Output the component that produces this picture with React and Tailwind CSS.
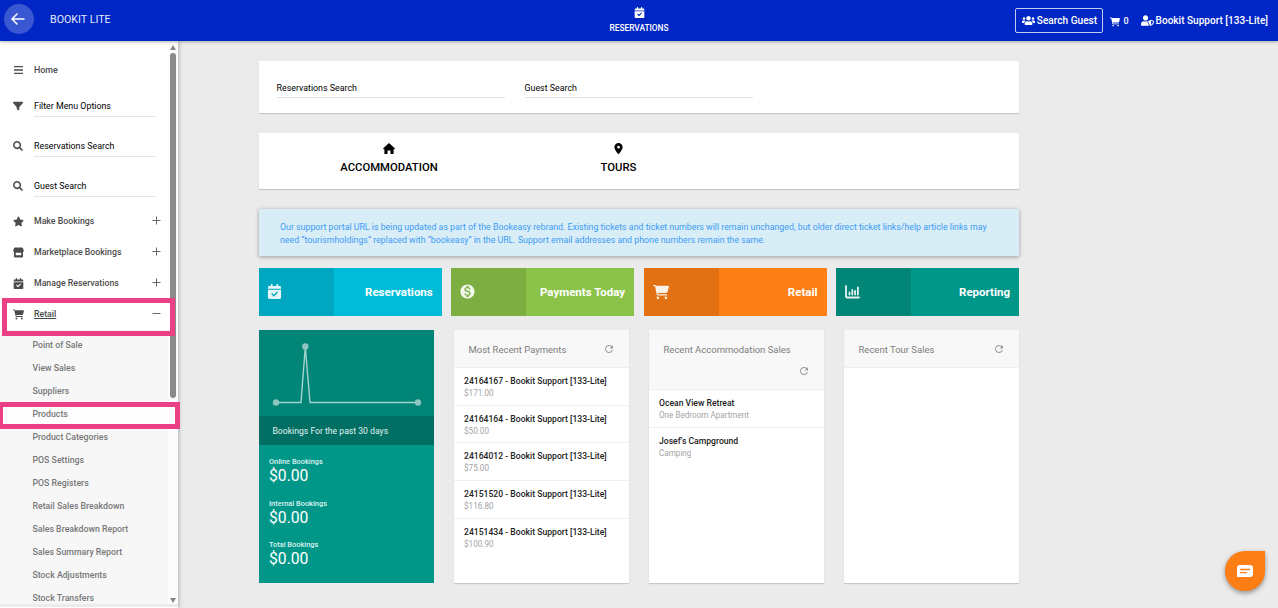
import React from "react";
import {
  FaFilter, FaStar, FaCalendarCheck, FaCartShopping,
  FaLocationDot,
} from "react-icons/fa6";
import { FaSearch, FaUsers, FaUserShield } from "react-icons/fa";
import { MdMonetizationOn, MdRefresh } from "react-icons/md";

function StoreIcon({ className }) {
  return (
    <svg viewBox="0 0 22 22" className={className} fill="currentColor">
      <path d="M4 1h14q1.200 0 1.700 1.200L21.500 7q.3 3-2.500 3H3Q.2 10 .5 7L2.300 2.200Q2.800 1 4 1z" />
      <path fillRule="evenodd" d="M2 9h18v10q0 2-2 2H4q-2 0-2-2zM5.500 11.500v5h11v-5z" />
    </svg>
  );
}

const searches = [
  [FaFilter, "Filter Menu Options"],
  [FaSearch, "Reservations Search"],
  [FaSearch, "Guest Search"],
];

const groups = [
  [FaStar, "Make Bookings"],
  [StoreIcon, "Marketplace Bookings"],
  [FaCalendarCheck, "Manage Reservations"],
  [FaCartShopping, "Retail"],
];

const retailLinks = [
  "Point of Sale", "View Sales", "Suppliers", "Products", "Product Categories",
  "POS Settings", "POS Registers", "Retail Sales Breakdown", "Sales Breakdown Report",
  "Sales Summary Report", "Stock Adjustments", "Stock Transfers",
];

const payments = [
  ["24164167 - Bookit Support [133-Lite]", "$171.00"],
  ["24164164 - Bookit Support [133-Lite]", "$50.00"],
  ["24164012 - Bookit Support [133-Lite]", "$75.00"],
  ["24151520 - Bookit Support [133-Lite]", "$116.80"],
  ["24151434 - Bookit Support [133-Lite]", "$100.90"],
];

const sales = [
  ["Ocean View Retreat", "One Bedroom Apartment"],
  ["Josef's Campground", "Camping"],
];

function ChartIcon({ className }) {
  return (
    <svg viewBox="0 0 15 14" className={className} fill="none" stroke="currentColor" strokeLinecap="round">
      <path d="M1 1v10.500q0 1 1 1h12" strokeWidth="1.8" />
      <path d="M4.500 7.500v2M7.300 5v4.500M10.100 6v3.500M12.900 2.500v7" strokeWidth="1.800" />
    </svg>
  );
}

function Header() {
  return (
    <header className="relative z-10 flex h-[41px] shrink-0 items-start justify-between bg-[#0027c5] text-white shadow-[0_1px_3px_rgba(0,0,0,0.3)]">
      <div className="flex w-[420px] items-center pt-1 pl-1">
        <div className="flex size-[30px] items-center justify-center rounded-full bg-[#3a57d2]">
          <svg viewBox="0 0 14 12" className="mr-0.5 h-3 w-3.5" fill="none" stroke="currentColor" strokeWidth="1.5" strokeLinecap="round" strokeLinejoin="round">
            <path d="M13 6H1M6 1 1 6l5 5" />
          </svg>
        </div>
        <span className="mt-0.5 ml-4 text-[10.7px] text-[#e4e9fa]">BOOKIT LITE</span>
      </div>
      <div className="flex flex-col items-center pt-[7px]">
        <FaCalendarCheck className="size-[11px]" />
        <span className="mt-1 text-[8.3px] leading-[13px] font-medium">RESERVATIONS</span>
      </div>
      <div className="flex w-[420px] items-center justify-end pt-2 pr-2.5 font-medium">
        <div className="flex h-[25px] w-[88px] items-center justify-center gap-0.5 rounded-xs border border-[#c3cdf2]">
          <FaUsers className="size-[13px]" />
          <span className="text-[10.1px] whitespace-nowrap">Search Guest</span>
        </div>
        <FaCartShopping className="mt-0.5 ml-[7px] size-[10px]" />
        <span className="mt-0.5 ml-[3px] text-[9px]">0</span>
        <FaUserShield className="ml-3 size-[13px]" />
        <span className="ml-0.5 text-[10.05px] whitespace-nowrap">Bookit Support [133-Lite]</span>
      </div>
    </header>
  );
}

function Sidebar() {
  return (
    <aside className="relative flex w-[178px] shrink-0 flex-col bg-white shadow-[1px_0_4px_rgba(0,0,0,0.25)]">
      <div className="flex h-[563px] shrink-0">
        <nav className="flex h-[563px] w-[168px] flex-col overflow-hidden pt-[13px] text-[8.75px] font-medium text-[#4c4c4c]">
          <div className="flex h-8 shrink-0 items-center pl-3.5">
            <svg viewBox="0 0 9 8" className="h-2 w-[9px]" stroke="currentColor" strokeWidth="1.300">
              <path d="M0 .7h9M0 4h9M0 7.300h9" />
            </svg>
            <span className="mt-0.5 ml-[11px] text-[8.9px]">Home</span>
          </div>
          {searches.map(([Icon, label]) => (
            <div key={label} className="flex h-10 shrink-0 items-center pl-[13px]">
              <Icon className="size-[10px]" />
              <div className="ml-[11px] flex h-[21px] w-[121px] items-center border-b border-[#e4e4e4] pt-0.5 text-[8.85px] font-normal text-black">
                {label}
              </div>
            </div>
          ))}
          {groups.map(([Icon, label]) => (
            <div key={label} className="flex h-[31px] shrink-0 items-center pl-[13px]">
              <Icon className="size-[11px]" />
              <span className={label === "Retail" ? "ml-2.5 underline" : "ml-2.5 pt-px"}>{label}</span>
              <svg viewBox="0 0 9 9" className="mr-[7px] mb-0.5 ml-auto size-[9px]" stroke="#666" strokeWidth="1">
                <path d={label === "Retail" ? "M0.5 4.5h8" : "M0.5 4.5h8M4.5 .5v8"} />
              </svg>
            </div>
          ))}
          <ul className="shrink-0 bg-[#f7f7f7] pt-1 text-[#777]">
            {retailLinks.map((label) => (
              <li key={label} className={`flex h-[23px] items-center pt-px pl-[32.5px] ${label === "Products" ? "bg-[#fdfdfd]" : ""}`}>{label}</li>
            ))}
          </ul>
        </nav>
        <div className="flex h-[563px] w-2.5 flex-col items-center justify-between bg-[#fcfcfc] pt-1 pb-px">
          <div className="flex flex-col items-center gap-[3px]">
            <svg viewBox="0 0 6 5" className="h-[5px] w-1.5" fill="#858585"><path d="M3 0 6 5H0z" /></svg>
            <div className="h-[345px] w-1.5 rounded-full bg-[#8a8a8a]" />
          </div>
          <svg viewBox="0 0 6 5" className="h-[5px] w-1.5" fill="#858585"><path d="M3 5 6 0H0z" /></svg>
        </div>
      </div>
      <div className="h-[3px] shrink-0 bg-[#ebebeb]" />
      <div className="absolute top-[257px] left-[2px] h-[38px] w-[173px] border-5 border-[#ea4084]" />
      <div className="absolute top-[361px] left-0 h-[27px] w-[180px] border-5 border-l-3 border-[#ea4084]" />
    </aside>
  );
}

function Tile({ icon, label, base, dark }) {
  return (
    <div className={`flex h-12 text-white ${base}`}>
      <div className={`flex w-[75px] items-center pb-px pl-2 ${dark}`}>{icon}</div>
      <div className="flex flex-1 items-center justify-end pt-0.5 pr-[9px] text-[11.5px] font-bold whitespace-nowrap">{label}</div>
    </div>
  );
}

function ListCard({ title, rows, wrapped }) {
  return (
    <section className="h-[253px] bg-white shadow-[0_1px_1px_rgba(0,0,0,0.15)]">
      <div className={`flex justify-between border-b border-[#eee] bg-[#f8f8f8] pt-[13px] pr-3.5 pl-[14.5px] text-[#7d7d7d] ${wrapped ? "h-[60px] flex-wrap content-start" : "h-[38px]"}`}>
        <span className={`pt-px text-[9.5px] leading-3 whitespace-nowrap ${wrapped ? "w-full" : ""}`}>{title}</span>
        <MdRefresh className={`size-3 text-[#9a9a9a] ${wrapped ? "mt-[9px] ml-auto" : ""}`} />
      </div>
      {rows.map(([name, detail], i) => (
        <div key={name} className={`h-[37.7px] px-2.5 pt-[7px] ${i < rows.length - 1 ? "border-b border-[#f0f0f0]" : ""}`}>
          <div className="text-[8.62px] leading-3 font-medium whitespace-nowrap text-[#222]">{name}</div>
          <div className="text-[8.15px] leading-3 text-[#a3a3a3]">{detail}</div>
        </div>
      ))}
    </section>
  );
}

function BookingsCard() {
  return (
    <section className="h-[253px] bg-[#009688] text-white">
      <div className="h-[86px] bg-[#008577]">
        <svg viewBox="0 0 175 86" className="h-[86px] w-full" fill="none">
          <path d="M17 72.500H42L46.300 17 51 72.500H159" stroke="#a5d4cf" strokeWidth="1.4" />
          <g fill="#8dc6c0">
            <circle cx="17" cy="72.500" r="3.200" />
            <circle cx="46.300" cy="16.500" r="3.200" />
            <circle cx="159" cy="72.500" r="3.200" />
          </g>
        </svg>
      </div>
      <div className="flex h-[29px] items-center bg-[#006f63] pt-px pl-[13.5px] text-[8.65px] text-[#e0f2f0]">Bookings For the past 30 days</div>
      <div className="flex flex-col pt-[11px] pl-2.5">
        {["Online Bookings", "Internal Bookings", "Total Bookings"].map((label) => (
          <div key={label} className="h-[41.5px]">
            <div className="text-[7.4px] leading-3 font-medium text-[#dff3f1]">{label}</div>
            <div className="text-[15.7px] leading-[16px]">$0.00</div>
          </div>
        ))}
      </div>
    </section>
  );
}

function Field({ label }) {
  return (
    <div className="flex h-[21px] w-[228px] items-center border-b border-[#e3e3e3] pt-[3px] text-[8.85px] text-black">{label}</div>
  );
}

export default function App() {
  return (
    <div className="relative flex h-[608px] w-[1278px] flex-col overflow-hidden bg-[#ebebeb] font-['Roboto',sans-serif]">
      <Header />
      <div className="flex min-h-0 flex-1">
        <Sidebar />
        <main className="ml-[81px] w-[760px] pt-5">
          <section className="flex h-[52px] gap-5 bg-white pt-4 pl-[17.5px] shadow-[0_1px_1px_rgba(0,0,0,0.15)]">
            <Field label="Reservations Search" />
            <Field label="Guest Search" />
          </section>
          <section className="mt-5 flex h-14 bg-white pt-2.5 pl-[15px] text-[11.3px] leading-[14px] font-medium text-black shadow-[0_1px_1px_rgba(0,0,0,0.15)]">
            <div className="flex w-[230px] flex-col items-center gap-[7px]">
              <svg viewBox="0 0 12 11" className="h-[11px] w-3" fill="currentColor">
                <path d="M6 0 12 5.500 11.300 6.300H10.600V10.400q0 .6-.6.6H7.500V7.400H4.500V11H2q-.6 0-.6-.6V6.300H.7L0 5.500z" />
              </svg>
              ACCOMMODATION
            </div>
            <div className="flex w-[229px] flex-col items-center gap-[7px]">
              <FaLocationDot className="size-[11px]" />
              TOURS
            </div>
          </section>
          <section className="mt-5 h-[47px] bg-[#d9edf7] pt-3 pl-[21px] text-[8.8px] leading-[12.5px] text-[#3b9cf5] shadow-[0_1px_4px_rgba(0,0,0,0.35)]">
            <p className="whitespace-nowrap">Our support portal URL is being updated as part of the Bookeasy rebrand. Existing tickets and ticket numbers will remain unchanged, but older direct ticket links/help article links may</p>
            <p className="whitespace-nowrap">need “tourismholdings” replaced with “bookeasy” in the URL. Support email addresses and phone numbers remain the same.</p>
          </section>
          <div className="mt-3 grid grid-cols-4 gap-[9.7px]">
            <Tile icon={<FaCalendarCheck className="size-[15px] opacity-90" />} label="Reservations" base="bg-[#00bcd8]" dark="bg-[#00a7c0]" />
            <Tile icon={<MdMonetizationOn className="size-[17px] opacity-90" />} label="Payments Today" base="bg-[#8bc34a]" dark="bg-[#7cae42]" />
            <Tile icon={<FaCartShopping className="ml-px size-4 opacity-90" />} label="Retail" base="bg-[#ff7f17]" dark="bg-[#e27114]" />
            <Tile icon={<ChartIcon className="ml-px h-3.5 w-[15px] opacity-90" />} label="Reporting" base="bg-[#009688]" dark="bg-[#008577]" />
          </div>
          <div className="mt-3.5 grid grid-cols-4 gap-5">
            <BookingsCard />
            <ListCard title="Most Recent Payments" rows={payments} />
            <ListCard title="Recent Accommodation Sales" rows={sales} wrapped />
            <ListCard title="Recent Tour Sales" rows={[]} />
          </div>
        </main>
      </div>
      <button className="absolute right-[13px] bottom-[17px] flex size-10 items-center justify-center rounded-full rounded-tr-[4px] bg-[#fd7e14] shadow-[0_2px_5px_rgba(0,0,0,0.4)]">
        <svg viewBox="0 0 16 12" className="h-3 w-4">
          <path d="M3 0h10q3 0 3 3v6q0 3-3 3H0V3q0-3 3-3z" fill="#fff" />
          <path d="M3.500 4.500h9M3.500 7.700h6" stroke="#fd7e14" strokeWidth="1.300" strokeLinecap="round" />
        </svg>
      </button>
    </div>
  );
}
